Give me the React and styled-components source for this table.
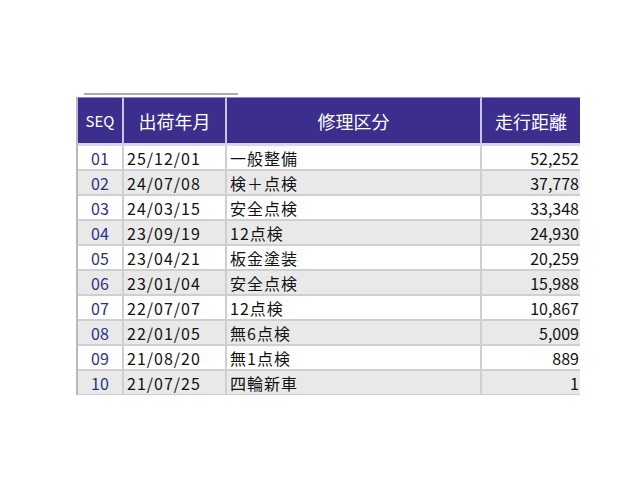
import React from "react";
import styled, { createGlobalStyle } from "styled-components";

const GlobalStyle = createGlobalStyle`
  html, body {
    margin: 0;
    padding: 0;
    background: #ffffff;
  }
  body {
    font-family: "Noto Sans CJK JP", "Noto Sans", sans-serif;
  }
`;

const rows = [
  { seq: "01", date: "25/12/01", kind: "一般整備", km: "52,252" },
  { seq: "02", date: "24/07/08", kind: "検＋点検", km: "37,778" },
  { seq: "03", date: "24/03/15", kind: "安全点検", km: "33,348" },
  { seq: "04", date: "23/09/19", kind: "12点検", km: "24,930" },
  { seq: "05", date: "23/04/21", kind: "板金塗装", km: "20,259" },
  { seq: "06", date: "23/01/04", kind: "安全点検", km: "15,988" },
  { seq: "07", date: "22/07/07", kind: "12点検", km: "10,867" },
  { seq: "08", date: "22/01/05", kind: "無6点検", km: "5,009" },
  { seq: "09", date: "21/08/20", kind: "無1点検", km: "889" },
  { seq: "10", date: "21/07/25", kind: "四輪新車", km: "1" },
];

const Page = styled.div`
  padding: 93px 0 0 76px;
`;

const TabLine = styled.div`
  width: 154px;
  height: 2px;
  margin-left: 8px;
  margin-bottom: 2px;
  background: #a9a9b4;
`;

const Frame = styled.div`
  width: 504px;
  height: 298px;
  overflow: hidden;
  border-left: 2px solid #b9b9c0;
  box-sizing: border-box;
`;

const Grid = styled.table`
  border-collapse: separate;
  border-spacing: 0;
  table-layout: fixed;
  width: 502px;
`;

const HeadCell = styled.th`
  height: 45px;
  padding: 0;
  background: #3b2e8c;
  color: #ffffff;
  font-weight: normal;
  font-size: ${(p) => (p.$small ? "15px" : "18px")};
  line-height: 20px;
  text-align: center;
  border-top: 1px solid #8e86c8;
  border-bottom: 3px solid #d9d6ee;
  border-right: 2px solid #c9c3ea;
  &:last-child {
    border-right: none;
  }
`;

const Row = styled.tr`
  background: ${(p) => (p.$alt ? "#e9e9e9" : "#ffffff")};
`;

const Cell = styled.td`
  height: 23px;
  padding: 0 ${(p) => (p.$align === "right" ? "1px" : "3px")};
  font-size: 16px;
  line-height: 20px;
  color: ${(p) => (p.$seq ? "#2f2f86" : "#111111")};
  text-align: ${(p) => p.$align || "left"};
  white-space: nowrap;
  overflow: hidden;
  border-bottom: 2px solid #cfcfcf;
  border-right: 2px solid #cfcfcf;
  letter-spacing: ${(p) => (p.$wide ? "1px" : "0")};
  &:last-child {
    border-right: none;
  }
`;

export default function App() {
  return (
    <>
      <GlobalStyle />
      <Page>
        <TabLine />
        <Frame>
          <Grid>
            <colgroup>
              <col style={{ width: 46 }} />
              <col style={{ width: 103 }} />
              <col style={{ width: 255 }} />
              <col style={{ width: 98 }} />
            </colgroup>
            <thead>
              <tr>
                <HeadCell $small>SEQ</HeadCell>
                <HeadCell>出荷年月</HeadCell>
                <HeadCell>修理区分</HeadCell>
                <HeadCell>走行距離</HeadCell>
              </tr>
            </thead>
            <tbody>
              {rows.map((r, i) => (
                <Row key={r.seq} $alt={i % 2 === 1}>
                  <Cell $seq $align="center">{r.seq}</Cell>
                  <Cell $wide>{r.date}</Cell>
                  <Cell $wide>{r.kind}</Cell>
                  <Cell $align="right">{r.km}</Cell>
                </Row>
              ))}
            </tbody>
          </Grid>
        </Frame>
      </Page>
    </>
  );
}
